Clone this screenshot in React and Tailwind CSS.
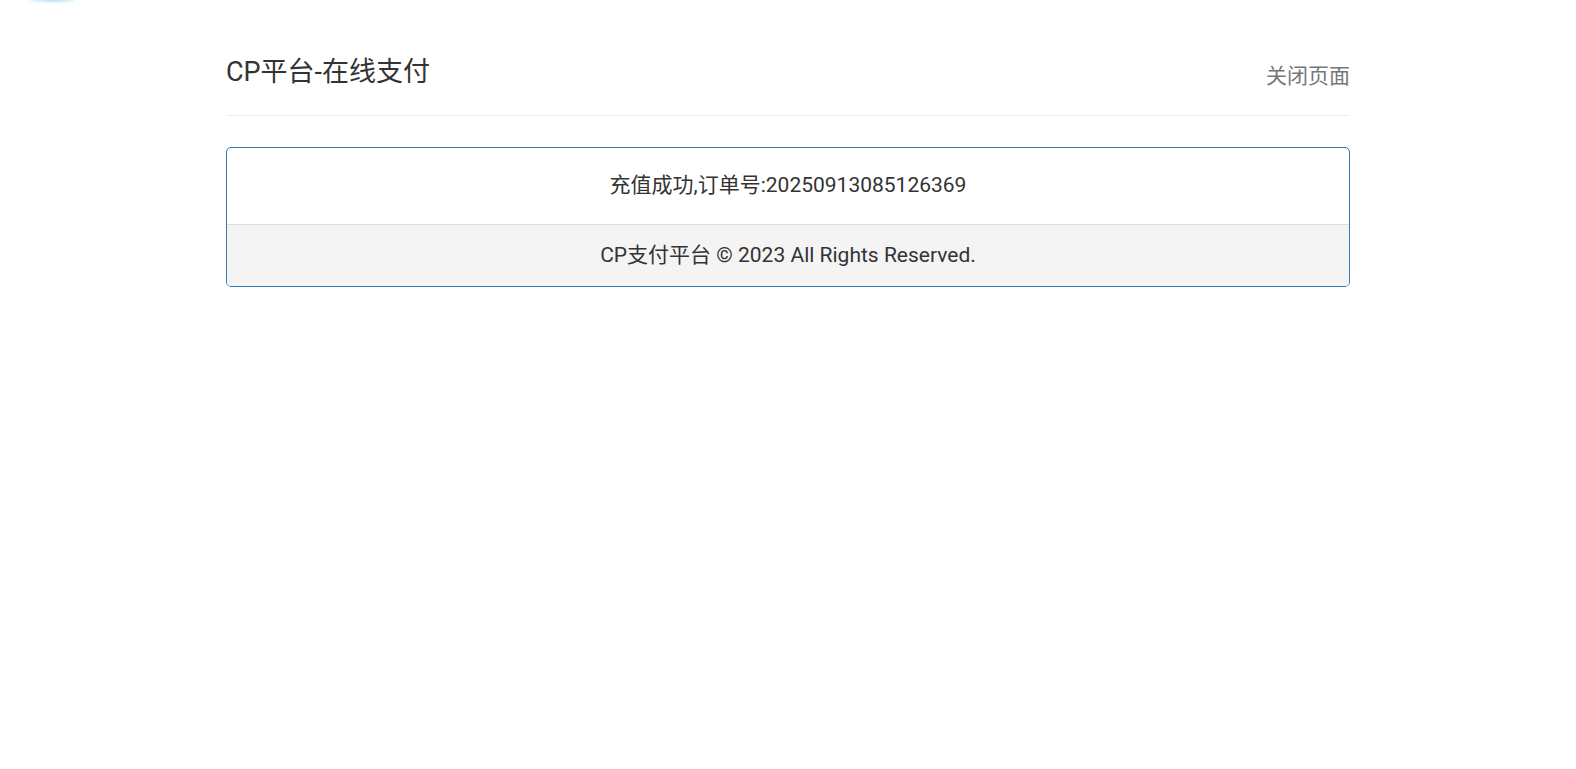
// Payment result page: header, divider, and a result panel with footer strip.

export default function App() {
  return (
    <div
      className="relative h-screen w-full overflow-hidden bg-white text-[#333]"
      style={{ fontFamily: 'Roboto, "Noto Sans CJK SC", sans-serif' }}
    >
      {/* Decorative blob peeking from the top-left corner */}
      <div className="absolute left-[28px] top-[-10px] h-[12px] w-[48px] rounded-full bg-gradient-to-r from-[#e6f6fd] via-[#9fdcf3] to-[#d8f1fb] opacity-80 blur-[1px]" />

      <div className="mx-auto w-[1124px] pt-[53px]">
        {/* Header */}
        <div className="flex items-end justify-between border-b border-[#eeeeee] pb-[24px]">
          <h1 className="text-[27px] leading-[38px] font-normal text-[#333]">CP平台-在线支付</h1>
          <a className="text-[21px] leading-[30px] text-[#777] cursor-pointer">关闭页面</a>
        </div>

        {/* Result panel */}
        <div className="mt-[31px] overflow-hidden rounded-[5px] border border-[#337ab7]">
          <div className="flex h-[76px] items-center justify-center text-[21px] text-[#333]">
            充值成功,订单号:20250913085126369
          </div>
          <div className="flex h-[62px] items-center justify-center border-t border-[#dddddd] bg-[#f4f4f4] text-[21px] text-[#333]">
            CP支付平台 © 2023 All Rights Reserved.
          </div>
        </div>
      </div>
    </div>
  );
}
